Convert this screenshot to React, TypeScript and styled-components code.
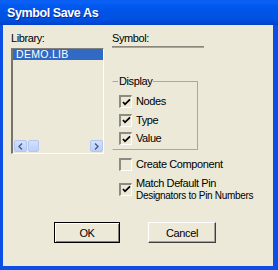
import React from "react";
import styled, { createGlobalStyle } from "styled-components";

const Global = createGlobalStyle`
  html, body { margin: 0; padding: 0; background: #ffffff; }
  body { width: 278px; height: 270px; overflow: hidden; font-family: "Liberation Sans", Arial, sans-serif; }
`;

const Window = styled.div`
  width: 278px;
  height: 270px;
  box-sizing: border-box;
  display: flex;
  flex-direction: column;
  background: #0a4fe3;
`;

const TitleBar = styled.div`
  height: 25px;
  flex: none;
  display: flex;
  align-items: center;
  padding-left: 7px;
  background: linear-gradient(
    to bottom,
    #0a5cf0 0px,
    #0a62f5 2px,
    #0058ee 6px,
    #0054e6 12px,
    #0052e3 18px,
    #0048d6 23px,
    #003fc6 25px
  );
`;

const Title = styled.span`
  color: #ffffff;
  font-family: "Liberation Sans", Arial, sans-serif;
  font-weight: bold;
  font-size: 12.5px;
  letter-spacing: -0.4px;
  text-shadow: 1px 1px 0 #0a2a9a;
`;

const Frame = styled.div`
  flex: 1;
  display: flex;
  border-left: 3px solid #0b4fe4;
  border-right: 5px solid #0b4fe4;
  border-bottom: 4px solid #0b4fe4;
`;

const Content = styled.div`
  flex: 1;
  background: #ece9d8;
  padding: 7px 0 0 8px;
  display: flex;
  flex-direction: column;
  font-size: 11px;
  letter-spacing: -0.4px;
  color: #000000;
`;

const Top = styled.div`
  display: flex;
  gap: 8px;
`;

const Column = styled.div<{ $w?: number }>`
  display: flex;
  flex-direction: column;
  width: ${(p) => (p.$w ? `${p.$w}px` : "auto")};
`;

const Label = styled.div`
  height: 13px;
  line-height: 13px;
  white-space: nowrap;
`;

const ListBox = styled.div`
  margin-top: 3px;
  height: 106px;
  box-sizing: border-box;
  border-top: 1px solid #808080;
  border-left: 2px solid #77746a;
  border-right: 1px solid #ffffff;
  border-bottom: 1px solid #ffffff;
  display: flex;
  flex-direction: column;
  justify-content: space-between;
`;

const Item = styled.div`
  height: 11px;
  line-height: 11px;
  background: #316ac5;
  color: #ffffff;
  padding-left: 3px;
  font-size: 10.5px;
  letter-spacing: 0.3px;
`;

const HScroll = styled.div`
  height: 12px;
  display: flex;
  align-items: stretch;
  padding-left: 1px;
  margin-bottom: 1px;
`;

const ScrollBtn = styled.div<{ $w: number }>`
  width: ${(p) => p.$w}px;
  box-sizing: border-box;
  background: linear-gradient(to bottom, #d4e0fd, #bccffb);
  border: 1px solid #b2c6f2;
  border-radius: 2px;
  display: flex;
  align-items: center;
  justify-content: center;
`;

const Track = styled.div`
  flex: 1;
`;

const SymbolField = styled.div`
  margin-top: 1px;
  width: 92px;
  height: 2px;
  border-top: 1px solid #8a877c;
  border-bottom: 1px solid #a9a699;
  box-sizing: border-box;
`;

const Group = styled.fieldset`
  margin: 28px 0 0 0;
  padding: 8px 0 0 6px;
  width: 86px;
  height: 74px;
  box-sizing: border-box;
  border: 1px solid #aca899;
  border-left-color: transparent;
  display: flex;
  flex-direction: column;
  gap: 5.5px;
  min-width: 0;
`;

const Legend = styled.legend`
  padding: 0 1px 0 1px;
  margin-left: -1px;
  font-size: 11px;
  line-height: 11px;
`;

const CheckRow = styled.div<{ $mt?: number; $center?: boolean }>`
  display: flex;
  align-items: ${(p) => (p.$center ? "center" : "flex-start")};
  gap: 4px;
  margin-top: ${(p) => p.$mt ?? 0}px;
  margin-left: ${(p) => (p.$mt !== undefined ? 7 : 0)}px;
  white-space: nowrap;
`;

const Box = styled.div`
  width: 13px;
  height: 13px;
  flex: none;
  box-sizing: border-box;
  border-top: 2px solid #8d8a7f;
  border-left: 2px solid #8d8a7f;
  border-right: 1px solid #ffffff;
  border-bottom: 1px solid #ffffff;
  background: #ece9d8;
  display: flex;
  align-items: center;
  justify-content: center;
`;

const CheckText = styled.div`
  line-height: 13px;
  font-size: 11px;
`;

const SmallLine = styled.div`
  line-height: 11px;
  font-size: 10px;
  letter-spacing: -0.3px;
`;

const Buttons = styled.div`
  display: flex;
  gap: 28px;
  margin-top: 21px;
  padding-left: 43px;
`;

const Button = styled.div<{ $default?: boolean }>`
  width: ${(p) => (p.$default ? 66 : 68)}px;
  height: 21px;
  box-sizing: border-box;
  display: flex;
  align-items: center;
  justify-content: center;
  font-size: 11px;
  background: #ece9d8;
  ${(p) =>
    p.$default
      ? `border: 1px solid #000000; box-shadow: inset 1px 1px 0 #ffffff, inset -1px -1px 0 #808080;`
      : `border-top: 1px solid #ffffff; border-left: 1px solid #ffffff; border-right: 1px solid #404040; border-bottom: 1px solid #404040; box-shadow: inset -1px -1px 0 #a0a0a0;`}
`;

const Check = () => (
  <svg width="9" height="9" viewBox="0 0 9 9">
    <path d="M1 4 L3 6.3 L8 1.3" fill="none" stroke="#000" strokeWidth="1.8" />
  </svg>
);

const CheckBox = ({ checked }: { checked?: boolean }) => <Box>{checked && <Check />}</Box>;

export default function App() {
  return (
    <>
      <Global />
      <Window>
        <TitleBar>
          <Title>Symbol Save As</Title>
        </TitleBar>
        <Frame>
          <Content>
            <Top>
              <Column $w={93}>
                <Label>Library:</Label>
                <ListBox>
                  <Item>DEMO.LIB</Item>
                  <HScroll>
                    <ScrollBtn $w={13}>
                      <svg width="5" height="7" viewBox="0 0 5 7">
                        <path d="M4 0.5 L1 3.5 L4 6.5" fill="none" stroke="#4d6185" strokeWidth="1.5" />
                      </svg>
                    </ScrollBtn>
                    <ScrollBtn $w={11} style={{ marginLeft: 1 }} />
                    <Track />
                    <ScrollBtn $w={13}>
                      <svg width="5" height="7" viewBox="0 0 5 7">
                        <path d="M1 0.5 L4 3.5 L1 6.5" fill="none" stroke="#4d6185" strokeWidth="1.5" />
                      </svg>
                    </ScrollBtn>
                  </HScroll>
                </ListBox>
              </Column>
              <Column>
                <Label>Symbol:</Label>
                <SymbolField />
                <Group>
                  <Legend>Display</Legend>
                  <CheckRow>
                    <CheckBox checked />
                    <CheckText>Nodes</CheckText>
                  </CheckRow>
                  <CheckRow>
                    <CheckBox checked />
                    <CheckText>Type</CheckText>
                  </CheckRow>
                  <CheckRow>
                    <CheckBox checked />
                    <CheckText>Value</CheckText>
                  </CheckRow>
                </Group>
                <CheckRow $mt={8}>
                  <CheckBox />
                  <CheckText>Create Component</CheckText>
                </CheckRow>
                <CheckRow $mt={6} $center>
                  <CheckBox checked />
                  <div>
                    <CheckText>Match Default Pin</CheckText>
                    <SmallLine>Designators to Pin Numbers</SmallLine>
                  </div>
                </CheckRow>
              </Column>
            </Top>
            <Buttons>
              <Button $default>OK</Button>
              <Button>Cancel</Button>
            </Buttons>
          </Content>
        </Frame>
      </Window>
    </>
  );
}
